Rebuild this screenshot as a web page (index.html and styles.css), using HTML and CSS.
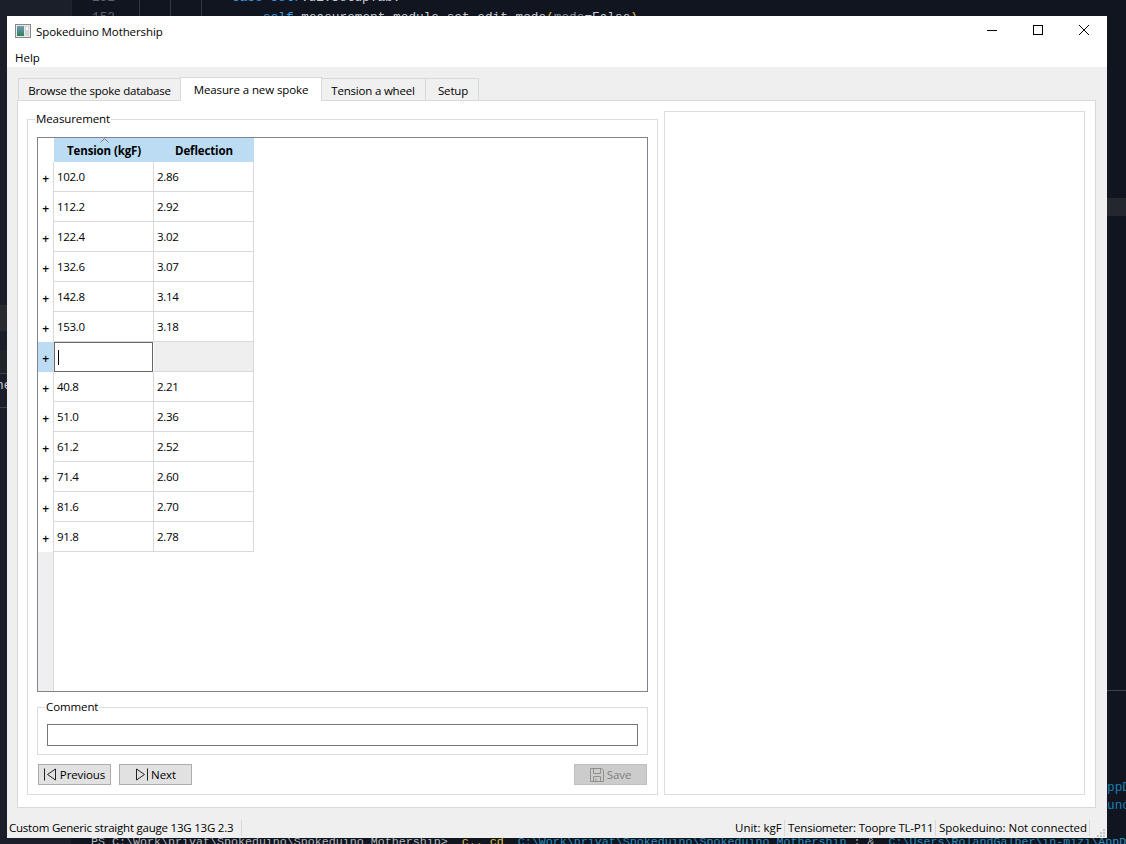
FILE: index.html
```html
<!DOCTYPE html>
<html lang="en">
<head>
<meta charset="utf-8">
<title>Spokeduino Mothership</title>
<link rel="stylesheet" href="styles.css">
</head>
<body>
<div class="desktop">
  <div class="bg-sidebar"></div>
  <div class="bg-guide g1"></div>
  <div class="bg-guide g2"></div>
  <div class="bg-guide g3"></div>
  <div class="bg-guide g4"></div>
  <div class="bg-band left-band"></div>
  <div class="bg-band left-band2"></div>
  <div class="bg-band right-band"></div>
  <div class="bg-line left-line1"></div>
  <div class="bg-line left-line2"></div>
  <div class="bg-line right-line"></div>
  <div class="bg-code c-num1">151</div>
  <div class="bg-code c-case"><span class="kw">case</span> <span class="var">self</span>.ui.SetupTab:</div>
  <div class="bg-code c-num2">152</div>
  <div class="bg-code c-self"><span class="var">self</span>.measurement_module.set_edit_mode<span class="yel">(</span><span class="muted">mode</span>=False<span class="yel">)</span></div>
  <div class="bg-code c-ne">ne</div>
  <div class="bg-code c-ppd">ppD</div>
  <div class="bg-code c-unc">unc</div>
  <div class="bg-code c-ps">PS C:\Work\privat\Spokeduino\Spokeduino Mothership&gt;  <span class="yel">c..</span> <span class="yel">cd</span>  <span class="path">C:\Work\privat\Spokeduino\Spokeduino Mothership</span> ; &amp;  <span class="path">C:\Users\RolandGalber\in-mizi\AppData</span></div>

  <main class="window">
    <header class="titlebar">
      <svg class="app-icon" width="16" height="14" viewBox="0 0 16 14">
        <defs>
          <linearGradient id="appgrad" x1="0" y1="0" x2="0" y2="1">
            <stop offset="0" stop-color="#6f9fb0"/>
            <stop offset="1" stop-color="#2f7d63"/>
          </linearGradient>
        </defs>
        <rect x="0.5" y="0.5" width="15" height="13" fill="#e8e8e8" stroke="#8a8a8a"/>
        <rect x="2" y="2" width="7" height="10" fill="url(#appgrad)"/>
        <rect x="10" y="2" width="4" height="10" fill="#cfd6d8"/>
        <rect x="11" y="3" width="2" height="3" fill="#ffffff"/>
      </svg>
      <span class="title-text">Spokeduino Mothership</span>
      <div class="win-controls">
        <svg class="ctl" width="46" height="30" viewBox="0 0 46 30"><path d="M18 14.5h10" stroke="#000" fill="none"/></svg>
        <svg class="ctl" width="46" height="30" viewBox="0 0 46 30"><rect x="18.5" y="9.5" width="9" height="9" stroke="#000" fill="none"/></svg>
        <svg class="ctl" width="46" height="30" viewBox="0 0 46 30"><path d="M18 9l10 10M28 9L18 19" stroke="#000" stroke-width="1" fill="none"/></svg>
      </div>
    </header>
    <nav class="menubar"><span class="menu-item">Help</span></nav>

    <section class="main">
      <div class="tabbar">
        <div class="tab t1">Browse the spoke database</div>
        <div class="tab t2 active">Measure a new spoke</div>
        <div class="tab t3">Tension a wheel</div>
        <div class="tab t4">Setup</div>
      </div>
      <div class="pane">
        <div class="group measurement">
          <span class="group-label">Measurement</span>
          <div class="tableview">
            <div class="thead">
              <div class="corner"></div>
              <div class="th">Tension (kgF)
                <svg class="sort" width="9" height="5" viewBox="0 0 9 5"><path d="M0.5 4.5L4.5 0.5L8.5 4.5" stroke="#7b7b7b" fill="none"/></svg>
              </div>
              <div class="th">Deflection</div>
            </div>
            <div class="tr"><div class="rh">+</div><div class="td">102.0</div><div class="td">2.86</div></div>
            <div class="tr"><div class="rh">+</div><div class="td">112.2</div><div class="td">2.92</div></div>
            <div class="tr"><div class="rh">+</div><div class="td">122.4</div><div class="td">3.02</div></div>
            <div class="tr"><div class="rh">+</div><div class="td">132.6</div><div class="td">3.07</div></div>
            <div class="tr"><div class="rh">+</div><div class="td">142.8</div><div class="td">3.14</div></div>
            <div class="tr"><div class="rh">+</div><div class="td">153.0</div><div class="td">3.18</div></div>
            <div class="tr current">
              <div class="rh">+</div>
              <div class="td editor"><span class="caret"></span></div>
              <div class="td"></div>
            </div>
            <div class="tr"><div class="rh">+</div><div class="td">40.8</div><div class="td">2.21</div></div>
            <div class="tr"><div class="rh">+</div><div class="td">51.0</div><div class="td">2.36</div></div>
            <div class="tr"><div class="rh">+</div><div class="td">61.2</div><div class="td">2.52</div></div>
            <div class="tr"><div class="rh">+</div><div class="td">71.4</div><div class="td">2.60</div></div>
            <div class="tr"><div class="rh">+</div><div class="td">81.6</div><div class="td">2.70</div></div>
            <div class="tr"><div class="rh">+</div><div class="td">91.8</div><div class="td">2.78</div></div>
            <div class="tfill"></div>
          </div>
          <div class="group comment">
            <span class="group-label">Comment</span>
            <div class="lineedit"></div>
          </div>
          <div class="buttons">
            <div class="btn">
              <svg width="13" height="13" viewBox="0 0 13 13"><path d="M0.5 0.5v12M11.5 1L3.5 6.5L11.5 12Z" stroke="#222" fill="none"/></svg>
              <span>Previous</span>
            </div>
            <div class="btn">
              <svg width="13" height="13" viewBox="0 0 13 13"><path d="M12.5 0.5v12M1.5 1L9.5 6.5L1.5 12Z" stroke="#222" fill="none"/></svg>
              <span>Next</span>
            </div>
            <div class="btn save">
              <svg width="14" height="14" viewBox="0 0 14 14"><path d="M0.5 0.5H11.5L13.5 2.5V13.5H0.5ZM3.5 0.5V5.5H10.5V0.5M3.5 13.5V8.5H10.5V13.5M6 10.5V13.5" stroke="#8f8f8f" fill="none"/></svg>
              <span>Save</span>
            </div>
          </div>
        </div>
        <div class="group preview"></div>
      </div>
    </section>

    <footer class="statusbar">
      <span class="st st-left">Custom Generic straight gauge 13G 13G 2.3</span>
      <span class="st st-unit">Unit: kgF</span>
      <span class="st st-tens">Tensiometer: Toopre TL-P11</span>
      <span class="st st-conn">Spokeduino: Not connected</span>
      <svg class="grip" width="10" height="10" viewBox="0 0 10 10" fill="#c4c4c4">
        <rect x="7" y="1" width="2" height="2"/>
        <rect x="4" y="4" width="2" height="2"/><rect x="7" y="4" width="2" height="2"/>
        <rect x="1" y="7" width="2" height="2"/><rect x="4" y="7" width="2" height="2"/><rect x="7" y="7" width="2" height="2"/>
      </svg>
    </footer>
  </main>
</div>
</body>
</html>
```

FILE: styles.css
```css
* { box-sizing: border-box; }
html, body { margin: 0; padding: 0; height: 100%; overflow: hidden; }
body {
  background: #10151f;
  font-family: "Open Sans", "Noto Sans", sans-serif;
  font-size: 11.5px;
  letter-spacing: -0.2px;
  color: #000;
}
.desktop { position: relative; width: 1126px; height: 844px; overflow: hidden; display: flex; align-items: flex-start; padding: 16px 0 0 7px; }

/* what shows behind the window */
.bg-sidebar { position: absolute; left: 0; top: 0; width: 71px; height: 844px; background: #1a1f2a; }
.bg-guide { position: absolute; top: 0; width: 1px; height: 16px; background: #343841; }
.g1 { left: 71px; background: #20242d; }
.g2 { left: 139px; }
.g3 { left: 170px; }
.g4 { left: 201px; }
.bg-band { position: absolute; }
.left-band { left: 0; top: 305px; width: 7px; height: 26px; background: #2a2b30; }
.left-band2 { left: 0; top: 350px; width: 7px; height: 23px; background: #20262a; }
.right-band { left: 1107px; top: 198px; width: 19px; height: 18px; background: #24282e; }
.bg-line { position: absolute; height: 1px; background: #3e4249; }
.left-line1 { left: 0; top: 373px; width: 7px; }
.left-line2 { left: 0; top: 407px; width: 7px; }
.right-line { left: 1107px; top: 690px; width: 19px; }
.bg-code { position: absolute; font-family: "Liberation Mono", "DejaVu Sans Mono", monospace; font-size: 12.75px; line-height: 16px; letter-spacing: 0; color: #c8ccd2; white-space: pre; }
.c-num1 { left: 92px; top: -10px; color: #5a616c; }
.c-num2 { left: 92px; top: 10px; color: #5a616c; }
.c-case { left: 232px; top: -10px; }
.c-self { left: 263px; top: 10px; }
.c-ne { left: -4px; top: 378px; color: #c8ccd2; }
.c-ppd { left: 1107px; top: 780px; color: #1b7fb3; }
.c-unc { left: 1107px; top: 798px; color: #1b7fb3; }
.c-ps { left: 91px; top: 834px; font-size: 11.67px; color: #b4b8be; }
.kw, .var { color: #3a9fe8; }
.yel { color: #e4c54a; }
.muted { color: #8a8f98; }
.path { color: #2a8fc0; }

/* window */
.window { position: relative; width: 1100px; height: 822px; background: #efefef; display: flex; flex-direction: column; flex: none; }
.titlebar { height: 30px; background: #fff; display: flex; align-items: center; padding-left: 8px; flex: none; }
.app-icon { flex: none; }
.title-text { margin-left: 5px; letter-spacing: -0.1px; }
.win-controls { margin-left: auto; display: flex; }
.ctl { display: block; }
.menubar { height: 21px; background: #fff; display: flex; align-items: center; padding-left: 8px; flex: none; }
.menu-item { padding-top: 1px; letter-spacing: 0; }

.main { flex: 1; display: flex; flex-direction: column; padding: 10px 11px 8px 10px; min-height: 0; }
.tabbar { display: flex; align-items: flex-end; height: 24px; padding-left: 1px; flex: none; position: relative; z-index: 1; margin-bottom: -1px; }
.tab { height: 22px; margin-bottom: 1px; background: #f0f0f0; border: 1px solid #d9d9d9; border-bottom: none; margin-left: -1px; display: flex; align-items: center; justify-content: center; white-space: nowrap; padding-top: 1px; }
.tab.active { height: 24px; margin-bottom: 0; background: #fff; padding-top: 0; padding-bottom: 1px; letter-spacing: -0.1px; position: relative; }
.t1 { width: 163px; margin-left: 0; }
.t2 { width: 142px; }
.t3 { width: 105px; padding-right: 1px; }
.t4 { width: 54px; padding-left: 2px; }
.pane { flex: 1; background: #fff; border: 1px solid #d9d9d9; display: flex; gap: 6px; padding: 10px 10px 12px 9px; min-height: 0; }

.group { position: relative; border: 1px solid #dcdcdc; background: #fff; }
.group-label { position: absolute; left: 7px; top: -8px; line-height: 14px; background: #fff; padding: 0 1px; letter-spacing: -0.1px; }
.measurement { width: 631px; margin-top: 8px; padding: 17px 9px 9px; display: flex; flex-direction: column; }
.preview { flex: 1; }

.tableview { flex: 1; border: 1px solid #82828c; display: flex; flex-direction: column; min-height: 0; }
.thead { display: flex; height: 24px; flex: none; }
.corner { width: 16px; flex: none; }
.th { position: relative; width: 100px; background: #bcdcf4; font-weight: 700; letter-spacing: -0.13px; display: flex; align-items: center; justify-content: center; padding-top: 1px; }
.sort { position: absolute; left: 46px; top: 0; }
.tr { display: flex; height: 30px; flex: none; }
.rh { width: 16px; flex: none; display: flex; align-items: center; justify-content: center; border-right: 1px solid #d9d9d9; font-size: 12px; font-weight: 600; padding: 3px 0 0 0; }
.td { width: 100px; border-right: 1px solid #d9d9d9; border-bottom: 1px solid #d9d9d9; display: flex; align-items: center; padding: 0 0 0 3px; letter-spacing: -0.3px; }
.current .rh { background: #bcdcf4; }
.current .td { background: #efefef; }
.current .td.editor { background: #fff; border: 1px solid #666; margin-right: 1px; width: 99px; padding-left: 3px; }
.caret { width: 1px; height: 15px; background: #000; }
.tfill { flex: 1; width: 16px; background: #efefef; border-right: 1px solid #d9d9d9; }

.comment { height: 48px; margin-top: 15px; flex: none; padding: 16px 9px 0; }
.lineedit { height: 22px; border: 1px solid #767676; background: #fff; }

.buttons { display: flex; gap: 8px; margin-top: 9px; height: 21px; flex: none; padding-left: 1px; padding-right: 1px; }
.btn { width: 73px; height: 21px; background: #e1e1e1; border: 1px solid #adadad; display: flex; align-items: center; justify-content: center; gap: 3px; letter-spacing: -0.1px; }
.btn.save { margin-left: auto; background: #cccccc; border-color: #bfbfbf; color: #7f7f7f; }

.statusbar { height: 22px; flex: none; display: flex; align-items: center; position: relative; padding: 2px 0 0 2px; }
.st { display: block; height: 16px; line-height: 15px; border-right: 1px solid #d9d9d9; white-space: nowrap; letter-spacing: -0.22px; }
.st-left { width: 233px; }
.st-unit { margin-left: auto; width: 50px; letter-spacing: 0; }
.st-tens { margin-left: 3px; width: 148px; }
.st-conn { margin-left: 3px; width: 151px; margin-right: 17px; letter-spacing: -0.02px; }
.grip { position: absolute; right: 1px; bottom: 0; }
```
